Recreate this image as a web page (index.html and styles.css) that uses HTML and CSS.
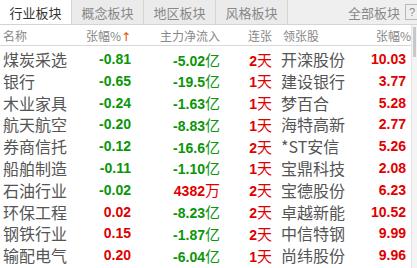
FILE: index.html
```html
<!DOCTYPE html>
<html>
<head>
<meta charset="utf-8">
<link rel="stylesheet" href="styles.css">
</head>
<body>
<div class="panel">
  <div class="tabs">
    <div class="tab active">行业板块</div>
    <div class="tab">概念板块</div>
    <div class="tab">地区板块</div>
    <div class="tab">风格板块</div>
    <div class="spacer"></div>
    <div class="all">全部板块</div>
    <div class="help">?</div>
  </div>
  <div class="body">
    <div class="table">
      <div class="row head">
        <div class="c1">名称</div>
        <div class="c2">张幅%<span class="arrow">↑</span></div>
        <div class="c3">主力净流入</div>
        <div class="c4">连张</div>
        <div class="c5">领张股</div>
        <div class="c6">张幅%</div>
      </div>
      <div class="row"><div class="c1">煤炭采选</div><div class="c2 num g">-0.81</div><div class="c3 num g">-5.02<span class="u">亿</span></div><div class="c4 num r">2<span class="u">天</span></div><div class="c5">开滦股份</div><div class="c6 num r">10.03</div></div>
      <div class="row"><div class="c1">银行</div><div class="c2 num g">-0.65</div><div class="c3 num g">-19.5<span class="u">亿</span></div><div class="c4 num r">1<span class="u">天</span></div><div class="c5">建设银行</div><div class="c6 num r">3.77</div></div>
      <div class="row"><div class="c1">木业家具</div><div class="c2 num g">-0.24</div><div class="c3 num g">-1.63<span class="u">亿</span></div><div class="c4 num r">1<span class="u">天</span></div><div class="c5">梦百合</div><div class="c6 num r">5.28</div></div>
      <div class="row"><div class="c1">航天航空</div><div class="c2 num g">-0.20</div><div class="c3 num g">-8.83<span class="u">亿</span></div><div class="c4 num r">1<span class="u">天</span></div><div class="c5">海特高新</div><div class="c6 num r">2.77</div></div>
      <div class="row"><div class="c1">券商信托</div><div class="c2 num g">-0.12</div><div class="c3 num g">-16.6<span class="u">亿</span></div><div class="c4 num r">2<span class="u">天</span></div><div class="c5">*ST安信</div><div class="c6 num r">5.26</div></div>
      <div class="row"><div class="c1">船舶制造</div><div class="c2 num g">-0.11</div><div class="c3 num g">-1.10<span class="u">亿</span></div><div class="c4 num r">1<span class="u">天</span></div><div class="c5">宝鼎科技</div><div class="c6 num r">2.08</div></div>
      <div class="row"><div class="c1">石油行业</div><div class="c2 num g">-0.02</div><div class="c3 num r">4382<span class="u">万</span></div><div class="c4 num r">2<span class="u">天</span></div><div class="c5">宝德股份</div><div class="c6 num r">6.23</div></div>
      <div class="row"><div class="c1">环保工程</div><div class="c2 num r">0.02</div><div class="c3 num g">-8.23<span class="u">亿</span></div><div class="c4 num r">2<span class="u">天</span></div><div class="c5">卓越新能</div><div class="c6 num r">10.52</div></div>
      <div class="row"><div class="c1">钢铁行业</div><div class="c2 num r">0.15</div><div class="c3 num g">-1.87<span class="u">亿</span></div><div class="c4 num r">2<span class="u">天</span></div><div class="c5">中信特钢</div><div class="c6 num r">9.99</div></div>
      <div class="row"><div class="c1">输配电气</div><div class="c2 num r">0.20</div><div class="c3 num g">-6.04<span class="u">亿</span></div><div class="c4 num r">1<span class="u">天</span></div><div class="c5">尚纬股份</div><div class="c6 num r">9.96</div></div>
    </div>
    <div class="scroll"><div class="thumb"></div></div>
  </div>
</div>
</body>
</html>
```
FILE: styles.css
```css
* { box-sizing: border-box; }
html, body { margin: 0; padding: 0; background: #fff; }
body { width: 417px; height: 268px; overflow: hidden; font-family: "Noto Sans CJK SC", "Liberation Sans", sans-serif; }
.panel { display: flex; flex-direction: column; width: 417px; height: 268px; }
.tabs { display: flex; height: 25px; background: #efefef; border-bottom: 1px solid #d4d4d4; align-items: stretch; }
.tab { width: 72px; display: flex; align-items: center; justify-content: center; font-size: 13px; color: #888; background: #ebebeb; border-right: 1px solid #d4d4d4; }
.tab.active { background: #fff; color: #333; }
.spacer { flex: 1; }
.all { display: flex; align-items: center; font-size: 13px; color: #888; margin-right: 5px; }
.help { align-self: center; width: 13px; height: 16px; border: 1px solid #b8b8b8; border-right: none; font-size: 11px; color: #888; display: flex; align-items: center; justify-content: center; font-family: "Liberation Sans", sans-serif; margin-right: -1px; }
.body { flex: 1; display: flex; }
.table { flex: 1; display: flex; flex-direction: column; }
.row { display: grid; grid-template-columns: 80px 48px 89px 52px 88px 46px; padding-left: 3px; height: 21.8px; align-items: center; color: #555; font-size: 16px; white-space: nowrap; }
.row.head { height: 21px; font-size: 12px; color: #888; border-bottom: 1px solid #d8d8d8; margin-bottom: 1px; }
.c2, .c3, .c4, .c6 { text-align: right; }
.c5 { padding-left: 9px; }
.head .c5 { padding-left: 11px; }
.head .c6 { margin-right: -5px; }
.arrow { color: #e05000; font-family: "DejaVu Sans", sans-serif; font-size: 12px; }
.num { font-family: "Liberation Sans", sans-serif; font-weight: bold; font-size: 14px; }
.num .u { font-family: "Noto Sans CJK SC", sans-serif; font-weight: normal; font-size: 15px; }
.g { color: #0a960a; }
.r { color: #e00000; }
.scroll { width: 6px; background: #f4f4f4; border-left: 1px solid #e4e4e4; }
.thumb { height: 30px; margin: 2px 1px 0 1px; background: #c8c8c8; }
```
